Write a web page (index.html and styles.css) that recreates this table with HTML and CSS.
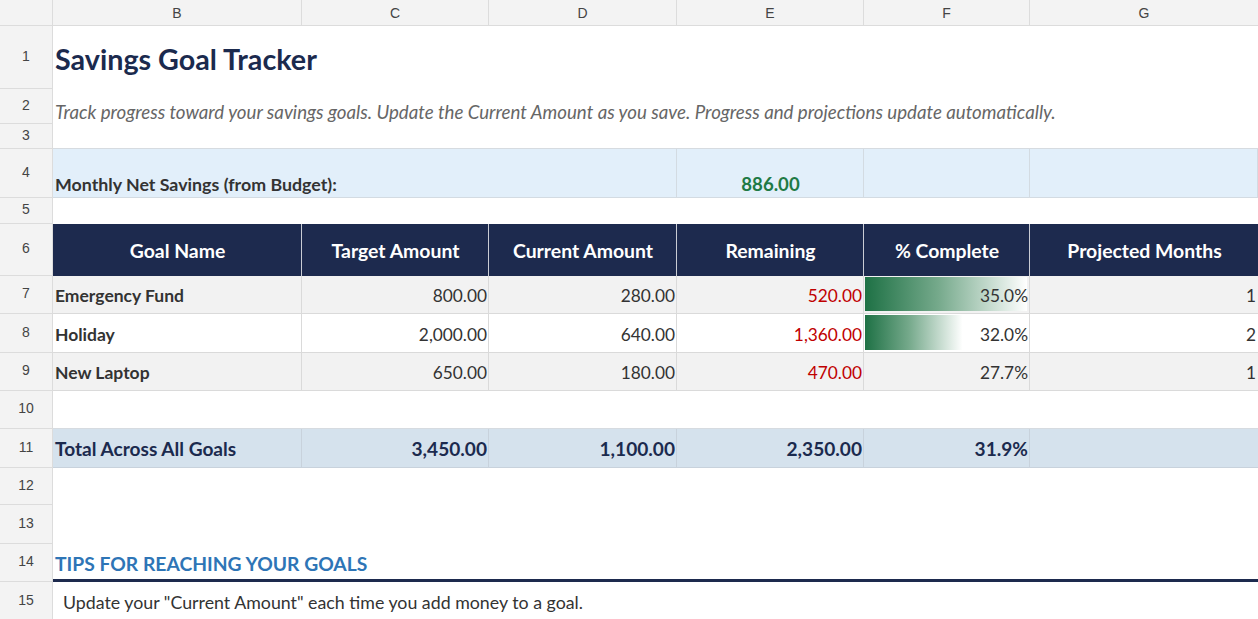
FILE: index.html
```html
<!DOCTYPE html>
<html>
<head>
<meta charset="utf-8">
<link rel="stylesheet" href="styles.css">
</head>
<body>
<div class="sheet">
  <div class="row colhead">
    <div class="ch corner"></div>
    <div class="ch">B</div>
    <div class="ch">C</div>
    <div class="ch">D</div>
    <div class="ch">E</div>
    <div class="ch">F</div>
    <div class="ch">G</div>
  </div>

  <div class="row r1">
    <div class="rh">1</div>
    <div class="cell span6 title">Savings Goal Tracker</div>
  </div>

  <div class="row r2">
    <div class="rh">2</div>
    <div class="cell span6 subtitle">Track progress toward your savings goals. Update the Current Amount as you save. Progress and projections update automatically.</div>
  </div>

  <div class="row r3">
    <div class="rh">3</div>
    <div class="cell span6 lined"></div>
  </div>

  <div class="row r4">
    <div class="rh">4</div>
    <div class="cell span3 inputrow label">Monthly Net Savings (from Budget):</div>
    <div class="cell inputrow value">886.00</div>
    <div class="cell inputrow"></div>
    <div class="cell inputrow"></div>
  </div>

  <div class="row r5">
    <div class="rh">5</div>
    <div class="cell span6"></div>
  </div>

  <div class="row r6">
    <div class="rh">6</div>
    <div class="cell th">Goal Name</div>
    <div class="cell th">Target Amount</div>
    <div class="cell th">Current Amount</div>
    <div class="cell th">Remaining</div>
    <div class="cell th">% Complete</div>
    <div class="cell th">Projected Months</div>
  </div>

  <div class="row r7">
    <div class="rh">7</div>
    <div class="cell td shade name">Emergency Fund</div>
    <div class="cell td shade num">800.00</div>
    <div class="cell td shade num">280.00</div>
    <div class="cell td shade num neg">520.00</div>
    <div class="cell td shade num bar" style="--w:100%">35.0%</div>
    <div class="cell td shade num">1</div>
  </div>

  <div class="row r8">
    <div class="rh">8</div>
    <div class="cell td name">Holiday</div>
    <div class="cell td num">2,000.00</div>
    <div class="cell td num">640.00</div>
    <div class="cell td num neg">1,360.00</div>
    <div class="cell td num bar" style="--w:61%">32.0%</div>
    <div class="cell td num">2</div>
  </div>

  <div class="row r9">
    <div class="rh">9</div>
    <div class="cell td shade name">New Laptop</div>
    <div class="cell td shade num">650.00</div>
    <div class="cell td shade num">180.00</div>
    <div class="cell td shade num neg">470.00</div>
    <div class="cell td shade num">27.7%</div>
    <div class="cell td shade num">1</div>
  </div>

  <div class="row r10">
    <div class="rh">10</div>
    <div class="cell span6 lined"></div>
  </div>

  <div class="row r11">
    <div class="rh">11</div>
    <div class="cell total name">Total Across All Goals</div>
    <div class="cell total num">3,450.00</div>
    <div class="cell total num">1,100.00</div>
    <div class="cell total num">2,350.00</div>
    <div class="cell total num">31.9%</div>
    <div class="cell total"></div>
  </div>

  <div class="row r12">
    <div class="rh">12</div>
    <div class="cell span6"></div>
  </div>

  <div class="row r13">
    <div class="rh">13</div>
    <div class="cell span6"></div>
  </div>

  <div class="row r14">
    <div class="rh">14</div>
    <div class="cell span6 tips">TIPS FOR REACHING YOUR GOALS</div>
  </div>

  <div class="row r15">
    <div class="rh">15</div>
    <div class="cell span6 tip">Update your "Current Amount" each time you add money to a goal.</div>
  </div>
</div>
</body>
</html>
```

FILE: styles.css
```css
* { box-sizing: border-box; }

html, body {
  margin: 0;
  padding: 0;
  background: #ffffff;
}

body {
  font-family: Lato, "Open Sans", "Liberation Sans", sans-serif;
  color: #333333;
  overflow: hidden;
}

.sheet {
  width: 1258px;
}

.row {
  display: grid;
  grid-template-columns: 53px 249px 187px 188px 187px 166px 228px;
}

/* column header */
.colhead { height: 26px; }
.ch {
  background: #f3f3f3;
  border-right: 1px solid #dcdcdc;
  border-bottom: 1px solid #dcdcdc;
  display: flex;
  align-items: center;
  justify-content: center;
  font-family: "Liberation Sans", Arial, sans-serif;
  font-size: 14px;
  color: #444;
}
.ch:last-child { border-right: none; }

/* row header */
.rh {
  background: #f3f3f3;
  border-right: 1px solid #dcdcdc;
  border-bottom: 1px solid #dcdcdc;
  display: flex;
  align-items: center;
  justify-content: center;
  font-family: "Liberation Sans", Arial, sans-serif;
  font-size: 14px;
  color: #444;
  padding-bottom: 3px;
}

.r1 { height: 63px; }
.r2 { height: 35px; }
.r3 { height: 25px; }
.r4 { height: 49px; }
.r5 { height: 26px; }
.r6 { height: 52px; }
.r7 { height: 38px; }
.r8 { height: 39px; }
.r9 { height: 38px; }
.r10 { height: 38px; }
.r11 { height: 39px; }
.r12 { height: 37px; }
.r13 { height: 39px; }
.r14 { height: 38px; }
.r15 { height: 40px; }

.cell {
  display: flex;
  align-items: flex-end;
  padding: 0 1px 5px 2px;
  white-space: nowrap;
  min-width: 0;
}

.span3 { grid-column: span 3; }
.span6 { grid-column: span 6; }

.lined { border-bottom: 1px solid #d6dbe0; }

.title {
  font-size: 28.7px;
  font-weight: 700;
  color: #1b2a4e;
  align-items: center;
  padding-top: 2px;
  padding-bottom: 0;
}

.subtitle {
  font-size: 18.7px;
  font-style: italic;
  color: #666666;
  padding-bottom: 1px;
}

.inputrow {
  background: #e2effa;
  border-right: 1px solid #d3dbe2;
  border-bottom: 1px solid #d3dbe2;
  font-size: 17.8px;
  padding-bottom: 2px;
}
.inputrow.label {
  font-weight: 700;
  color: #333;
}
.inputrow.value {
  justify-content: center;
  font-weight: 700;
  font-size: 18.6px;
  color: #1e7a45;
  padding-bottom: 2px;
}

.th {
  background: #1d2a4e;
  color: #ffffff;
  font-weight: 700;
  font-size: 19.4px;
  justify-content: center;
  align-items: center;
  padding-top: 1px;
  padding-bottom: 0;
  border-right: 1px solid #c9ccd4;
}
.th:last-child { border-right: none; }

.td {
  font-size: 17.3px;
  color: #333;
  border-right: 1px solid #dadada;
  border-bottom: 1px solid #dadada;
  background: #ffffff;
  padding-bottom: 7px;
}
.td.shade { background-color: #f2f2f2; }
.td:last-child { border-right: none; padding-right: 2px; }

.name {
  font-weight: 700;
  font-size: 17.5px;
}

.num { justify-content: flex-end; }
.neg { color: #c00000; }

.bar {
  background-image: linear-gradient(to right, #1e7145 0%, #75a98b 45%, #ffffff 100%);
  background-repeat: no-repeat;
  background-position: 1px 1px;
  background-size: calc(var(--w) - 3px) calc(100% - 3px);
}

.total {
  background: #d5e2ed;
  color: #1b2a4e;
  font-weight: 700;
  font-size: 19.1px;
  border-right: 1px solid #c8d2dc;
  border-bottom: 1px solid #c8d2dc;
  padding-bottom: 7px;
}
.total:last-child { border-right: none; }

.tips {
  font-size: 19.3px;
  font-weight: 700;
  color: #2e75b6;
  border-bottom: 3px solid #1d2a4e;
  padding-bottom: 4px;
}

.tip {
  font-size: 17.8px;
  color: #333;
  padding-left: 10px;
  padding-bottom: 9px;
}
```
